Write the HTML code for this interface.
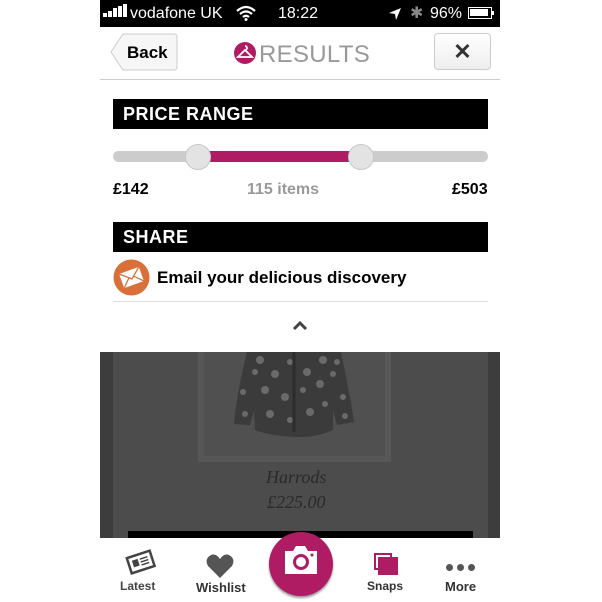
<!DOCTYPE html>
<html><head><style>
*{margin:0;padding:0;box-sizing:border-box}
body{width:602px;height:602px;background:#fff;position:relative;overflow:hidden;font-family:"Liberation Sans",Helvetica,sans-serif}
.a{position:absolute}
.hdr{background:#000;color:#fff;font-weight:bold;font-size:18px;padding-left:10px;line-height:30px;letter-spacing:0.5px}
</style></head><body>
<!-- status bar -->
<div class="a" style="left:100px;top:0;width:400px;height:27px;background:#000;color:#fff;font-size:16px;line-height:27px">
 <div class="a" style="left:3px;top:13px;width:4px;height:4px;background:#fff"></div>
 <div class="a" style="left:8px;top:11px;width:4px;height:6px;background:#fff"></div>
 <div class="a" style="left:13px;top:8px;width:4px;height:9px;background:#fff"></div>
 <div class="a" style="left:18px;top:6px;width:4px;height:11px;background:#fff"></div>
 <div class="a" style="left:23px;top:4px;width:4px;height:13px;background:#fff"></div>
 <span class="a" style="left:30px;top:0">vodafone UK</span>
 <svg class="a" style="left:135px;top:5px" width="22" height="16" viewBox="0 0 22 16"><path d="M2 6Q11-2 20 6M5 9Q11 4 17 9M8 12Q11 9.5 14 12" stroke="#fff" stroke-width="2.2" fill="none"/><circle cx="11" cy="14.5" r="1.5" fill="#fff"/></svg>
 <span class="a" style="left:178px;top:0">18:22</span>
 <svg class="a" style="left:288px;top:7px" width="14" height="14" viewBox="0 0 14 14"><path d="M13 1L1 6L7 7L8 13Z" fill="#fff"/></svg>
 <span class="a" style="left:310px;top:0;color:#888">✱</span>
 <span class="a" style="left:330px;top:0">96%</span>
 <div class="a" style="left:368px;top:7px;width:24px;height:12px;border:1.5px solid #fff"><div style="margin:1px;width:18px;height:7px;background:#fff"></div></div>
 <div class="a" style="left:392px;top:11px;width:2px;height:4px;background:#fff"></div>
</div>
<!-- nav -->
<div class="a" style="left:100px;top:27px;width:400px;height:53px;background:#fff;border-bottom:1px solid #ccc"></div>
<svg class="a" style="left:110px;top:33px" width="68" height="38"><path d="M13 1H64Q67 1 67 4V34Q67 37 64 37H13L1 19Z" fill="#f6f6f6" stroke="#ccc"/></svg>
<span class="a" style="left:127px;top:43px;font-weight:bold;font-size:17px">Back</span>
<div class="a" style="left:434px;top:33px;width:57px;height:37px;border:1px solid #ccc;border-radius:4px;background:linear-gradient(#fff,#eee);text-align:center;font-size:22px;font-weight:bold;line-height:35px;color:#333">✕</div>
<svg class="a" style="left:234px;top:42px" width="22" height="22" viewBox="0 0 22 22"><circle cx="11" cy="11" r="11" fill="#b01c63"/><path d="M11 4a2 2 0 1 1 0 4L4 15H18L11 8" stroke="#fff" stroke-width="1.8" fill="none"/></svg>
<span class="a" style="left:259px;top:41px;font-size:24px;color:#999;letter-spacing:0.3px">RESULTS</span>
<!-- price range -->
<div class="a hdr" style="left:113px;top:99px;width:375px;height:30px">PRICE RANGE</div>
<div class="a" style="left:113px;top:151px;width:375px;height:11px;background:#ccc;border-radius:6px"></div>
<div class="a" style="left:198px;top:151px;width:163px;height:11px;background:#b01c63"></div>
<div class="a" style="left:185px;top:144px;width:26px;height:26px;border-radius:50%;background:#e3e3e3;border:1px solid #c8c8c8"></div>
<div class="a" style="left:348px;top:144px;width:26px;height:26px;border-radius:50%;background:#e3e3e3;border:1px solid #c8c8c8"></div>
<span class="a" style="left:113px;top:181px;font-weight:bold;font-size:16px">£142</span>
<span class="a" style="left:247px;top:181px;font-weight:bold;font-size:16px;color:#999">115 items</span>
<span class="a" style="left:452px;top:181px;font-weight:bold;font-size:16px">£503</span>
<!-- share -->
<div class="a hdr" style="left:113px;top:222px;width:375px;height:30px">SHARE</div>
<svg class="a" style="left:113px;top:259px" width="37" height="37" viewBox="0 0 37 37"><circle cx="18.5" cy="18.5" r="18" fill="#d9703a"/><g transform="rotate(-20 18.5 18.5)"><rect x="8" y="11" width="21" height="15" fill="#fff"/><path d="M8 11L18.5 20L29 11M8 26L16 18M29 26L21 18" stroke="#d9703a" stroke-width="1.3" fill="none"/></g></svg>
<span class="a" style="left:157px;top:268px;font-weight:bold;font-size:17px">Email your delicious discovery</span>
<div class="a" style="left:113px;top:301px;width:375px;height:1px;background:#ddd"></div>
<svg class="a" style="left:292px;top:320px" width="16" height="10"><path d="M2 9L8 3L14 9" stroke="#444" stroke-width="3" fill="none"/></svg>
<!-- dark content -->
<div class="a" style="left:100px;top:352px;width:400px;height:186px;background:#3d3d3d"></div>
<div class="a" style="left:113px;top:352px;width:375px;height:186px;background:#4c4c4c"></div>
<div class="a" style="left:198px;top:352px;width:193px;height:110px;background:#575757"></div>
<div class="a" style="left:204px;top:352px;width:181px;height:104px;background:#505050"></div>
<svg class="a" style="left:215px;top:352px" width="160" height="85" viewBox="0 0 160 85">
<path d="M32 0H126Q132 30 136 50L139 70L122 73L118 58L118 78Q100 86 80 85Q56 84 40 78L39 58L35 73L19 72Q22 40 32 0Z" fill="#3b3b3b"/>
<g fill="#6a6a6a"><circle cx="45" cy="8" r="4"/><circle cx="60" cy="22" r="4"/><circle cx="75" cy="10" r="3"/><circle cx="92" cy="20" r="4"/><circle cx="108" cy="8" r="4"/><circle cx="50" cy="38" r="4"/><circle cx="70" cy="45" r="4"/><circle cx="88" cy="38" r="3"/><circle cx="105" cy="32" r="4"/><circle cx="118" cy="22" r="3"/><circle cx="55" cy="62" r="4"/><circle cx="75" cy="68" r="3"/><circle cx="95" cy="60" r="4"/><circle cx="110" cy="52" r="3"/><circle cx="28" cy="40" r="3"/><circle cx="30" cy="62" r="3"/><circle cx="128" cy="45" r="3"/><circle cx="130" cy="64" r="3"/><circle cx="40" cy="20" r="3"/><circle cx="122" cy="10" r="3"/></g>
<path d="M79 0V80" stroke="#2c2c2c" stroke-width="3"/></svg>
<span class="a" style="left:266px;top:467px;font-family:'Liberation Serif',serif;font-style:italic;font-size:18px;color:#2a2a2a">Harrods</span>
<span class="a" style="left:267px;top:492px;font-family:'Liberation Serif',serif;font-style:italic;font-size:18px;color:#2a2a2a">£225.00</span>
<div class="a" style="left:128px;top:531px;width:345px;height:7px;background:#000"></div>
<!-- tab bar -->
<div class="a" style="left:100px;top:538px;width:400px;height:62px;background:#fff"></div>
<svg class="a" style="left:124px;top:549px" width="34" height="28" viewBox="0 0 34 28"><g transform="rotate(-18 17 14)"><rect x="5" y="5" width="24" height="16" fill="#fff" stroke="#444" stroke-width="2.5"/><rect x="9" y="9" width="6" height="7" fill="#444"/><path d="M17 10H25M17 13H25M17 16H25" stroke="#444" stroke-width="1.5"/></g></svg>
<span class="a" style="left:120px;top:579px;font-size:12px;font-weight:bold;color:#444">Latest</span>
<svg class="a" style="left:206px;top:554px" width="28" height="24" viewBox="0 0 28 24"><path d="M14 24L2 12Q-2 5 5 1Q10 -1 14 5Q18 -1 23 1Q30 5 26 12Z" fill="#555"/></svg>
<span class="a" style="left:196px;top:580px;font-size:13px;font-weight:bold;color:#333">Wishlist</span>
<div class="a" style="left:269px;top:532px;width:64px;height:64px;border-radius:50%;background:#b01c63;box-shadow:0 2px 2px #999"></div>
<svg class="a" style="left:283px;top:545px" width="36" height="30" viewBox="0 0 36 30"><path d="M2 6H10L13 1H22L25 6H34V29H2Z" fill="#fff"/><circle cx="18" cy="17" r="8" fill="#b01c63"/><circle cx="18" cy="17" r="5" fill="#fff"/><circle cx="29" cy="10" r="1.5" fill="#b01c63"/></svg>
<div class="a" style="left:374px;top:553px;width:18px;height:17px;border:2px solid #b01c63;background:#fff"></div>
<div class="a" style="left:378px;top:557px;width:20px;height:18px;background:#b01c63"></div>
<span class="a" style="left:367px;top:579px;font-size:12px;font-weight:bold;color:#333">Snaps</span>
<div class="a" style="left:446px;top:564px;width:7px;height:7px;border-radius:50%;background:#555"></div>
<div class="a" style="left:457px;top:564px;width:7px;height:7px;border-radius:50%;background:#555"></div>
<div class="a" style="left:468px;top:564px;width:7px;height:7px;border-radius:50%;background:#555"></div>
<span class="a" style="left:445px;top:579px;font-size:13px;font-weight:bold;color:#333">More</span>
</body></html>
